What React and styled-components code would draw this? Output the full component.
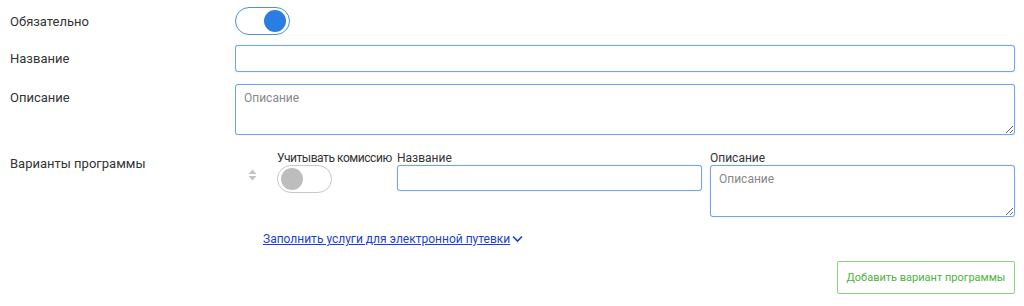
import React from 'react'
import styled, { createGlobalStyle } from 'styled-components'

const GlobalStyle = createGlobalStyle`
  body {
    margin: 0;
    background: #fff;
    font-family: Roboto, "Noto Sans", sans-serif;
    color: #333;
  }
`

const Form = styled.div`
  width: 1024px;
  padding: 7px 9px 0 10px;
  box-sizing: border-box;
`

const Row = styled.div`
  display: grid;
  grid-template-columns: 225px 1fr;
  align-items: ${({ top }) => (top ? 'start' : 'center')};
  margin-bottom: ${({ gap }) => gap || 11}px;
`

const Label = styled.div`
  font-size: 13px;
  color: #333;
  padding-top: ${({ offset }) => offset || 0}px;
`

const Switch = styled.div`
  width: 55px;
  height: 28px;
  box-sizing: border-box;
  border-radius: 14px;
  border: 1px solid ${({ on }) => (on ? '#4a8fe0' : '#c8c8c8')};
  display: flex;
  align-items: center;
  justify-content: ${({ on }) => (on ? 'flex-end' : 'flex-start')};
  padding: 0 3px;
  background: #fff;
`

const Knob = styled.div`
  width: 22px;
  height: 22px;
  border-radius: 50%;
  background: ${({ on }) => (on ? '#2a7de1' : '#bdbdbd')};
`

const Input = styled.input`
  width: 100%;
  height: ${({ h }) => h || 27}px;
  box-sizing: border-box;
  border: 1px solid #6ea6e8;
  border-radius: 3px;
  box-shadow: 0 0 1px #9cc3f0;
  outline: none;
  padding: 0 8px;
  font-family: inherit;
  font-size: 12px;
`

const Area = styled.textarea`
  width: 100%;
  height: ${({ h }) => h}px;
  box-sizing: border-box;
  border: 1px solid #6ea6e8;
  border-radius: 3px;
  box-shadow: 0 0 1px #9cc3f0;
  outline: none;
  padding: 6px 8px;
  font-family: inherit;
  font-size: 12px;
  resize: vertical;
  display: block;
  &::placeholder {
    color: #888;
  }
`

const Variant = styled.div`
  display: flex;
  align-items: flex-start;
  margin-top: -1px;
`

const Sorter = styled.div`
  width: 42px;
  display: flex;
  justify-content: center;
  padding-top: 18px;
  padding-right: 8px;
  box-sizing: border-box;
`

const Col = styled.div`
  display: flex;
  flex-direction: column;
  width: ${({ w }) => w}px;
  margin-right: ${({ mr }) => mr || 0}px;
`

const SmallLabel = styled.div`
  font-size: 12px;
  color: #333;
  line-height: 14px;
  white-space: nowrap;
  letter-spacing: ${({ tight }) => (tight ? '-0.45px' : '0')};
`

const LinkRow = styled.div`
  padding-left: 253px;
  margin-top: 11px;
`

const Link = styled.a`
  font-size: 12px;
  color: #1a3fd6;
  text-decoration: underline;
  display: inline-flex;
  align-items: center;
  gap: 2px;
  cursor: pointer;
`

const Footer = styled.div`
  display: flex;
  justify-content: flex-end;
  margin-top: 14px;
`

const AddButton = styled.button`
  width: 178px;
  height: 33px;
  border: 1px solid #8ad27c;
  background: #fff;
  color: #4db33d;
  font-family: inherit;
  font-size: 11px;
  white-space: nowrap;
  padding: 0;
  border-radius: 2px;
  cursor: pointer;
`

const SortIcon = () => (
  <svg width="9" height="12" viewBox="0 0 9 12">
    <path d="M4.5 0.5 L8.5 5 H0.5 Z" fill="#c4c4c4" />
    <path d="M4.5 11.5 L8.5 7 H0.5 Z" fill="#c4c4c4" />
  </svg>
)

const Chevron = () => (
  <svg width="11" height="8" viewBox="0 0 11 8">
    <path d="M1 1.5 L5.5 6 L10 1.5" fill="none" stroke="#1a3fd6" strokeWidth="1.6" />
  </svg>
)

export default function App() {
  return (
    <>
      <GlobalStyle />
      <Form>
        <Row gap={10}>
          <Label>Обязательно</Label>
          <Switch on>
            <Knob on />
          </Switch>
        </Row>
        <Row gap={12}>
          <Label>Название</Label>
          <Input />
        </Row>
        <Row top gap={17}>
          <Label offset={6}>Описание</Label>
          <Area h={51} placeholder="Описание" />
        </Row>
        <Row top gap={0}>
          <Label offset={4}>Варианты программы</Label>
          <Variant>
            <Sorter>
              <SortIcon />
            </Sorter>
            <Col w={120}>
              <SmallLabel tight>Учитывать комиссию</SmallLabel>
              <Switch>
                <Knob />
              </Switch>
            </Col>
            <Col w={305} mr={8}>
              <SmallLabel>Название</SmallLabel>
              <Input h={26} />
            </Col>
            <Col w={305}>
              <SmallLabel>Описание</SmallLabel>
              <Area h={52} placeholder="Описание" />
            </Col>
          </Variant>
        </Row>
        <LinkRow>
          <Link>
            Заполнить услуги для электронной путевки
            <Chevron />
          </Link>
        </LinkRow>
        <Footer>
          <AddButton>Добавить вариант программы</AddButton>
        </Footer>
      </Form>
    </>
  )
}
